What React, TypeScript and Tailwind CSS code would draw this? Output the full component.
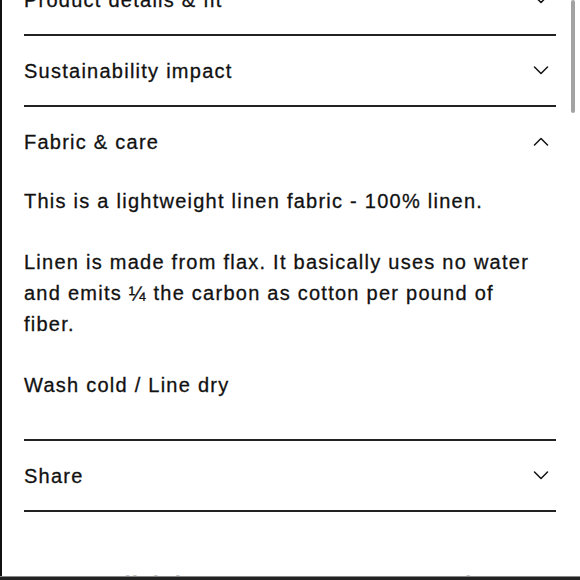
import React from "react";

const Chevron = ({ up = false }: { up?: boolean }) => (
  <svg width="16" height="9" viewBox="0 0 16 9" fill="none" className="mr-[7px]">
    {up ? (
      <polyline points="1.5,8 8,1.5 14.5,8" stroke="#111" strokeWidth="1.5" strokeLinecap="round" strokeLinejoin="round" />
    ) : (
      <polyline points="1.5,1 8,7.5 14.5,1" stroke="#111" strokeWidth="1.5" strokeLinecap="round" strokeLinejoin="round" />
    )}
  </svg>
);

const Header = ({ title, up = false }: { title: string; up?: boolean }) => (
  <div className="h-[69px] flex items-center justify-between">
    <span>{title}</span>
    <Chevron up={up} />
  </div>
);

export default function App() {
  return (
    <div className="w-[580px] h-[580px] flex flex-col bg-white overflow-hidden">
      <div
        className="relative h-[576px] overflow-hidden border-l-2 border-[#111] text-[#111] text-[20px] tracking-[1.25px] [-webkit-text-stroke:0.3px_#111]"
        style={{ fontFamily: '"Liberation Sans", Arial, sans-serif' }}
      >
        <div className="ml-[22px] w-[532px] -mt-[35px]">
          <div className="border-b-2 border-[#222]">
            <Header title="Product details & fit" />
          </div>
          <div className="border-b-2 border-[#222]">
            <Header title="Sustainability impact" />
          </div>
          <div className="border-b-2 border-[#222]">
            <Header title="Fabric & care" up />
            <div className="pt-[10px] pb-[38px] leading-[31px] flex flex-col gap-[30px]">
              <p>This is a lightweight linen fabric - 100% linen.</p>
              <p>
                Linen is made from flax. It basically uses no water
                <br />
                and emits ¼ the carbon as cotton per pound of
                <br />
                fiber.
              </p>
              <p>Wash cold / Line dry</p>
            </div>
          </div>
          <div className="border-b-2 border-[#222]">
            <Header title="Share" />
          </div>
          <div className="pt-[58px] font-bold text-[22px] leading-[30px] whitespace-nowrap">
            More stylish items - Dresses, tops and more
          </div>
        </div>
        <div className="absolute right-[5px] top-0 w-[4px] h-[113px] rounded-full bg-[#a3a3a3]" />
      </div>
      <div className="h-[4px] bg-[#222] border-t border-[#888]" />
    </div>
  );
}
